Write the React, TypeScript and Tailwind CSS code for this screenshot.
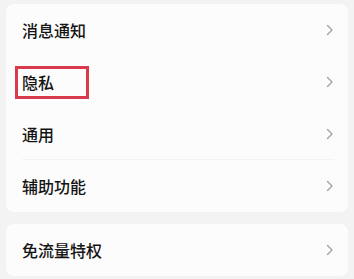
import React from "react";

const Chevron = () => (
  <svg width="8" height="12" viewBox="0 0 8 12" fill="none" className="shrink-0">
    <path d="M1.5 1.5 L6 6 L1.5 10.5" stroke="#a3a3a3" strokeWidth="1.4" strokeLinecap="round" strokeLinejoin="round" />
  </svg>
);

const Row = ({ label, boxed, divider }: { label: string; boxed?: boolean; divider?: boolean }) => (
  <div className="relative h-[52px] flex items-center justify-between pl-[16px] pr-[14px]">
    <div className="relative h-[16px]">
      {boxed && (
        <div className="absolute left-[-7px] top-[-8px] w-[74px] h-[33px] border-[3px] border-[#d93a4c]" />
      )}
      <span className="block text-[16px] font-medium text-[#141414] leading-[16px]">{label}</span>
    </div>
    <Chevron />
    {divider && <div className="absolute left-[16px] right-[14px] bottom-0 h-px bg-[#f3f3f3]" />}
  </div>
);

export default function App() {
  return (
    <div
      className="w-[354px] h-[279px] overflow-hidden bg-[#f3f3f3] pt-[4px] px-[6px]"
      style={{ fontFamily: '"Noto Sans CJK SC", "Noto Sans", sans-serif' }}
    >
      <div className="bg-[#fcfcfc] rounded-[8px]">
        <Row label="消息通知" />
        <Row label="隐私" boxed />
        <Row label="通用" divider />
        <Row label="辅助功能" />
      </div>
      <div className="bg-[#fcfcfc] rounded-[8px] mt-[12px]">
        <Row label="免流量特权" />
      </div>
    </div>
  );
}
